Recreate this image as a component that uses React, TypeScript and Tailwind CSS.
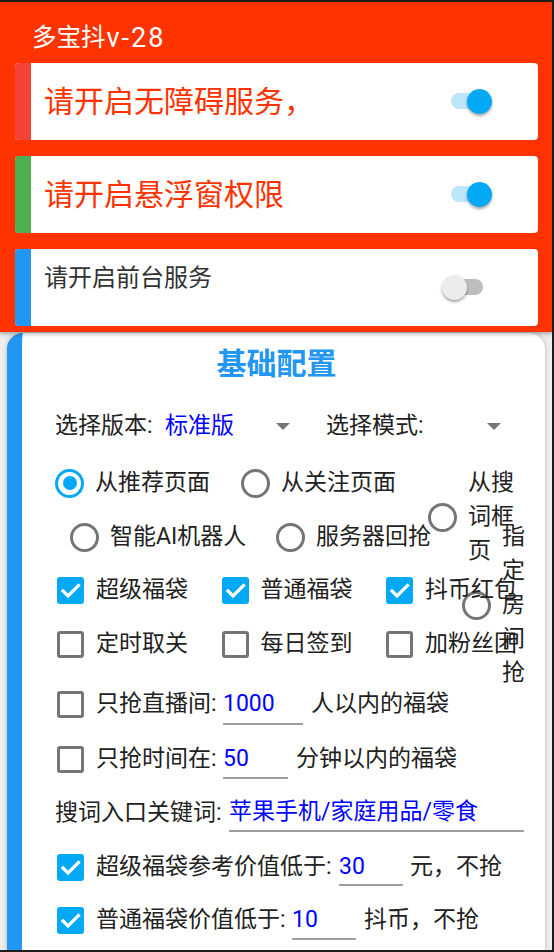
import React from "react";

const Check = () => (
  <svg width="27" height="27" viewBox="0 0 27 27">
    <path d="M6 14l5 5L21.5 8.5" fill="none" stroke="white" strokeWidth="3.2" strokeLinecap="square" />
  </svg>
);

function Box({ checked }: { checked?: boolean }) {
  return checked ? (
    <div className="ml-[2px] w-[27px] h-[27px] rounded-[3px] bg-[#03a9f4] shrink-0 flex items-center justify-center">
      <Check />
    </div>
  ) : (
    <div className="ml-[2px] w-[27px] h-[27px] rounded-[3px] border-[3px] border-[#757575] shrink-0" />
  );
}

function Ring({ on }: { on?: boolean }) {
  return on ? (
    <div className="w-[29px] h-[29px] rounded-full border-[3px] border-[#03a9f4] flex items-center justify-center shrink-0">
      <div className="w-[14px] h-[14px] rounded-full bg-[#03a9f4]" />
    </div>
  ) : (
    <div className="w-[29px] h-[29px] rounded-full border-[3px] border-[#757575] shrink-0" />
  );
}

const Arrow = () => (
  <svg width="14" height="7" viewBox="0 0 14 7">
    <polygon points="0,0 14,0 7,7" fill="#757575" />
  </svg>
);

function SwitchOn() {
  return (
    <div className="relative w-[50px] h-[25px] mr-[46px] shrink-0">
      <div className="absolute left-[9px] top-[4px] w-[40px] h-[16px] rounded-full bg-[#bde6fb]" />
      <div className="absolute right-0 top-0 w-[25px] h-[25px] rounded-full bg-[#03a9f4] shadow-[0_2px_3px_rgba(0,0,0,0.35)]" />
    </div>
  );
}

function SwitchOff() {
  return (
    <div className="relative w-[50px] h-[25px] mr-[46px] shrink-0">
      <div className="absolute left-[1px] top-[4px] w-[40px] h-[16px] rounded-full bg-[#bdbdbd]" />
      <div className="absolute left-0 top-0 w-[25px] h-[25px] rounded-full bg-[#ececec] shadow-[0_2px_3px_rgba(0,0,0,0.35)]" />
    </div>
  );
}

export default function App() {
  return (
    <div className="w-[554px] h-[952px] overflow-hidden bg-[#1c1c1c] pt-[2px] pb-[2px] pr-[2px] font-[family-name:Roboto,'Noto_Sans_CJK_SC',sans-serif] text-[#212121]">
      <div className="h-full bg-[#eeeeee] flex flex-col overflow-hidden">
        <header className="relative z-10 bg-[#ff3300] shadow-[0_2px_4px_rgba(0,0,0,0.3)] pb-[6px]">
          <div className="h-[61px] pt-[11px] pl-[32px] flex items-center text-white">
            <span className="text-[24.5px] leading-none">多宝抖</span>
            <span className="text-[27px] leading-none tracking-[2px] ml-[1px]">v-28</span>
          </div>
          <div className="flex flex-col gap-[16px] pl-[15px] pr-[14px]">
            <div className="flex items-center h-[77px] bg-white rounded-[4px] overflow-hidden">
              <div className="w-[16px] self-stretch bg-[#f44336]" />
              <div className="flex-1 ml-[13px] text-[30px] leading-[36px] text-[#ff3300]">请开启无障碍服务，</div>
              <SwitchOn />
            </div>
            <div className="flex items-center h-[77px] bg-white rounded-[4px] overflow-hidden">
              <div className="w-[16px] self-stretch bg-[#4caf50]" />
              <div className="flex-1 ml-[13px] text-[30px] leading-[36px] text-[#ff3300]">请开启悬浮窗权限</div>
              <SwitchOn />
            </div>
            <div className="flex items-center h-[77px] bg-white rounded-[4px] overflow-hidden">
              <div className="w-[16px] self-stretch bg-[#2196f3]" />
              <div className="flex-1 self-start mt-[13px] ml-[13px] text-[24px] leading-[32px] text-[#333333]">请开启前台服务</div>
              <SwitchOff />
            </div>
          </div>
        </header>

        <main className="flex-1 mt-[1px] mx-[7px] bg-white rounded-t-[16px] border-l-[15px] border-[#2196f3] shadow-[0_0_4px_rgba(0,0,0,0.25)] text-[23px]">
          <div className="pt-[12px] pr-[14px]">
            <div className="h-[36px] flex items-center justify-center text-[30px] font-bold text-[#2196f3]">基础配置</div>
          </div>

          <div className="pl-[33px]">
            {/* spinners */}
            <div className="flex items-center h-[40px] mt-[25px]">
              <div className="w-[110px] shrink-0">选择版本:</div>
              <div className="w-[136px] shrink-0 flex items-center justify-between pr-[11px]">
                <span className="text-[#0000ff]">标准版</span>
                <Arrow />
              </div>
              <div className="ml-[25px] w-[104px] shrink-0">选择模式:</div>
              <div className="w-[82px] shrink-0 flex items-center justify-end pr-[11px]">
                <Arrow />
              </div>
            </div>

            {/* radio row 1 */}
            <div className="flex items-start h-[34px] mt-[20px]">
              <div className="flex items-center w-[186px] shrink-0">
                <Ring on />
                <span className="ml-[11px] leading-[34px]">从推荐页面</span>
              </div>
              <div className="flex items-center w-[187px] shrink-0">
                <Ring />
                <span className="ml-[11px] leading-[34px]">从关注页面</span>
              </div>
              <div className="flex items-center shrink-0">
                <Ring />
                <span className="ml-[11px] w-[50px] leading-[34px]">从搜词框页</span>
              </div>
            </div>

            {/* radio row 2 */}
            <div className="flex items-start h-[34px] mt-[20px] pl-[15px]">
              <div className="flex items-center w-[206px] shrink-0">
                <Ring />
                <span className="ml-[11px] leading-[34px]">智能AI机器人</span>
              </div>
              <div className="flex items-center w-[186px] shrink-0">
                <Ring />
                <span className="ml-[11px] leading-[34px]">服务器回抢</span>
              </div>
              <div className="flex items-center shrink-0">
                <Ring />
                <span className="ml-[11px] w-[30px] leading-[34px]">指定房间抢</span>
              </div>
            </div>

            {/* checkbox rows */}
            <div className="flex items-center h-[34px] mt-[19px]">
              <div className="flex items-center w-[164.5px] shrink-0">
                <Box checked />
                <span className="ml-[12px]">超级福袋</span>
              </div>
              <div className="flex items-center w-[164.5px] shrink-0">
                <Box checked />
                <span className="ml-[12px]">普通福袋</span>
              </div>
              <div className="flex items-center shrink-0">
                <Box checked />
                <span className="ml-[12px]">抖币红包</span>
              </div>
            </div>
            <div className="flex items-center h-[34px] mt-[20px]">
              <div className="flex items-center w-[164.5px] shrink-0">
                <Box />
                <span className="ml-[12px]">定时取关</span>
              </div>
              <div className="flex items-center w-[164.5px] shrink-0">
                <Box />
                <span className="ml-[12px]">每日签到</span>
              </div>
              <div className="flex items-center shrink-0">
                <Box />
                <span className="ml-[12px]">加粉丝团</span>
              </div>
            </div>

            {/* live room */}
            <div className="flex items-center h-[42px] mt-[22px]">
              <Box />
              <span className="ml-[12px] w-[127px] shrink-0">只抢直播间:</span>
              <div className="self-stretch w-[80px] shrink-0 border-b-2 border-[#9e9e9e] flex items-center pt-[2px] text-[#0000ff]">1000</div>
              <span className="ml-[8px]">人以内的福袋</span>
            </div>

            {/* time */}
            <div className="flex items-center h-[40px] mt-[14px]">
              <Box />
              <span className="ml-[12px] w-[127px] shrink-0">只抢时间在:</span>
              <div className="self-stretch w-[65px] shrink-0 border-b-2 border-[#9e9e9e] flex items-center pt-[2px] text-[#0000ff]">50</div>
              <span className="ml-[8px]">分钟以内的福袋</span>
            </div>

            {/* keywords */}
            <div className="flex items-center h-[38px] mt-[15px]">
              <span className="w-[174px] shrink-0">搜词入口关键词:</span>
              <div className="self-stretch w-[295px] shrink-0 border-b-2 border-[#9e9e9e] flex items-center text-[#0000ff]">苹果手机/家庭用品/零食</div>
            </div>

            {/* super bag value */}
            <div className="flex items-center h-[38px] mt-[16px]">
              <Box checked />
              <span className="ml-[12px] w-[243px] shrink-0">超级福袋参考价值低于:</span>
              <div className="self-stretch w-[64px] shrink-0 border-b-2 border-[#9e9e9e] flex items-center pt-[2px] text-[#0000ff]">30</div>
              <span className="ml-[7px]">元，不抢</span>
            </div>

            {/* normal bag value */}
            <div className="flex items-center h-[40px] mt-[14px]">
              <Box checked />
              <span className="ml-[12px] w-[196px] shrink-0">普通福袋价值低于:</span>
              <div className="self-stretch w-[64px] shrink-0 border-b-2 border-[#9e9e9e] flex items-center pt-[2px] text-[#0000ff]">10</div>
              <span className="ml-[8px]">抖币，不抢</span>
            </div>
          </div>
        </main>
      </div>
    </div>
  );
}
